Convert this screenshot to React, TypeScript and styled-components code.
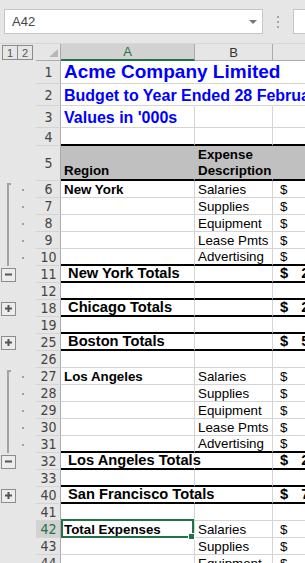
import React from "react";
import styled, { createGlobalStyle } from "styled-components";

const GRID = "#d4d4d4";
const HEAD_LINE = "#ababab";
const GREEN = "#217346";
const CHROME = "#e6e6e6";

const GlobalStyle = createGlobalStyle`
  html, body { margin: 0; padding: 0; }
  body {
    background: ${CHROME};
    font-family: "Liberation Sans", Arial, sans-serif;
    overflow: hidden;
  }
`;

const Window = styled.div`
  width: 305px;
  height: 563px;
  overflow: hidden;
  background: ${CHROME};
  display: flex;
  flex-direction: column;
`;

/* ---------- toolbar ---------- */

const Toolbar = styled.div`
  height: 44px;
  flex: none;
  box-sizing: border-box;
  display: flex;
  align-items: flex-start;
  padding: 9px 0 0 4px;
  border-bottom: 1px solid #d8d8d8;
`;

const NameBox = styled.div`
  width: 259px;
  height: 25px;
  flex: none;
  box-sizing: border-box;
  background: #fff;
  border: 1px solid #c6c6c6;
  display: flex;
  align-items: center;
  padding: 0 5px 0 7px;
  font-size: 13px;
  color: #444;
`;

const DropArrow = styled.span`
  margin-left: auto;
  width: 0;
  height: 0;
  border-left: 4px solid transparent;
  border-right: 4px solid transparent;
  border-top: 4px solid #777;
`;

const Grip = styled.div`
  margin: 7px 0 0 14px;
  width: 2px;
  flex: none;
  display: flex;
  flex-direction: column;
  gap: 3px;
`;

const GripDot = styled.span`
  width: 2px;
  height: 2px;
  background: #a6a6a6;
`;

const FormulaBox = styled.div`
  margin-left: 14px;
  flex: 1;
  height: 25px;
  box-sizing: border-box;
  background: #fff;
  border: 1px solid #c6c6c6;
  border-right: none;
`;

/* ---------- column header ---------- */

const HeaderRow = styled.div`
  display: flex;
  height: 17px;
  flex: none;
  background: ${CHROME};
`;

const LevelButtons = styled.div`
  width: 36px;
  flex: none;
  box-sizing: border-box;
  display: flex;
  padding: 1px 0 0 2px;
`;

const LevelButton = styled.div`
  width: 16px;
  height: 15px;
  box-sizing: border-box;
  border: 1px solid #8c8c8c;
  font-size: 11px;
  color: #555;
  display: flex;
  align-items: center;
  justify-content: center;
  & + & {
    margin-left: -1px;
  }
`;

const Corner = styled.div`
  width: 25px;
  flex: none;
  box-sizing: border-box;
  border-right: 1px solid ${HEAD_LINE};
  border-bottom: 1px solid ${HEAD_LINE};
  display: flex;
  align-items: flex-end;
  justify-content: flex-end;
  padding: 0 2px 3px 0;
`;

const ColHead = styled.div<{ $w?: number; $sel?: boolean }>`
  ${(p) => (p.$w ? `width: ${p.$w}px; flex: none;` : `flex: 1;`)}
  box-sizing: border-box;
  border-right: 1px solid ${HEAD_LINE};
  border-bottom: ${(p) => (p.$sel ? `2px solid ${GREEN}` : `1px solid ${HEAD_LINE}`)};
  background: ${(p) => (p.$sel ? "#d2d2d2" : CHROME)};
  color: ${(p) => (p.$sel ? GREEN : "#333")};
  font-size: 13px;
  display: flex;
  align-items: center;
  justify-content: center;
`;

/* ---------- sheet rows ---------- */

const Row = styled.div<{ $h: number }>`
  display: flex;
  height: ${(p) => p.$h}px;
  flex: none;
  background: #fff;
`;

const Gutter = styled.div`
  width: 36px;
  flex: none;
  display: flex;
  background: ${CHROME};
`;

const Level1 = styled.div`
  width: 17px;
  flex: none;
  display: flex;
  align-items: stretch;
`;

const Level2 = styled.div`
  width: 19px;
  flex: none;
  display: flex;
  align-items: center;
`;

const Bracket = styled.div<{ $top?: boolean }>`
  margin-left: 7px;
  width: 4px;
  box-sizing: border-box;
  border-left: 2px solid #a3a3a3;
  border-top: ${(p) => (p.$top ? "2px solid #a3a3a3" : "none")};
  margin-top: ${(p) => (p.$top ? "2px" : "0")};
`;

const Dot = styled.span`
  margin-left: 5px;
  width: 2px;
  height: 2px;
  background: #a0a0a0;
`;

const OutlineBtn = styled.div`
  align-self: center;
  margin-left: 1px;
  width: 15px;
  height: 14px;
  box-sizing: border-box;
  border: 1px solid #8c8c8c;
  background: #ececec;
  display: flex;
  align-items: center;
  justify-content: center;
`;

const RowNum = styled.div<{ $sel?: boolean }>`
  width: 25px;
  flex: none;
  box-sizing: border-box;
  border-right: 1px solid ${HEAD_LINE};
  border-bottom: 1px solid ${GRID};
  background: ${(p) => (p.$sel ? "#d2d2d2" : CHROME)};
  color: ${(p) => (p.$sel ? GREEN : "#444")};
  display: flex;
  align-items: center;
  justify-content: center;
  padding-left: 1px;
  font-family: "Liberation Sans Narrow", "DejaVu Sans Condensed", "Liberation Sans", sans-serif;
  font-size: 14px;
`;

type Edge = "grid" | "black";

const Cell = styled.div<{
  $w?: number;
  $edge?: Edge;
  $open?: boolean;
  $fill?: string;
  $pad?: number;
}>`
  ${(p) => (p.$w ? `width: ${p.$w}px; flex: none;` : `flex: 1;`)}
  box-sizing: border-box;
  border-right: 1px solid ${(p) => (p.$open || p.$fill ? "transparent" : GRID)};
  border-bottom: ${(p) => (p.$edge === "black" ? "2px solid #000" : `1px solid ${GRID}`)};
  background: ${(p) => p.$fill ?? "transparent"};
  display: flex;
  align-items: flex-end;
  padding: 0 0 0 ${(p) => p.$pad ?? 3}px;
  white-space: nowrap;
  min-width: 0;
`;

const SelectedCell = styled(Cell)`
  position: relative;
`;

const Selection = styled.div`
  position: absolute;
  top: -2px;
  left: 0;
  right: 0;
  bottom: -1px;
  border: 2px solid ${GREEN};
  pointer-events: none;
`;

const FillHandle = styled.div`
  position: absolute;
  right: -3px;
  bottom: -4px;
  width: 5px;
  height: 5px;
  background: ${GREEN};
  border: 1px solid #fff;
`;

const Text = styled.span<{ $size?: number; $bold?: boolean; $color?: string; $lh?: string }>`
  font-size: ${(p) => p.$size ?? 13.33}px;
  font-weight: ${(p) => (p.$bold ? 700 : 400)};
  color: ${(p) => p.$color ?? "#000"};
  line-height: ${(p) => p.$lh ?? "normal"};
  white-space: pre;
`;

const WrapText = styled.span`
  font-size: 13.33px;
  font-weight: 700;
  line-height: 16px;
  white-space: normal;
  color: #000;
`;

const Amount = styled.span`
  margin-left: 13px;
`;

/* ---------- data ---------- */

type GutterKind = "none" | "top" | "bar" | "minus" | "plus";

interface RowSpec {
  n: number;
  h?: number;
  gutter?: GutterKind;
  edge?: Edge;
  a?: React.ReactNode;
  aOpen?: boolean;
  b?: React.ReactNode;
  bOpen?: boolean;
  c?: React.ReactNode;
  fill?: string;
  sel?: boolean;
}

const blue = "#0000ff";

const item = (t: string) => <Text>{t}</Text>;
const dollar = <Text>$</Text>;
const total = (t: string) => (
  <Text $size={14.67} $bold $lh="1.05">
    {" " + t}
  </Text>
);
const totalAmt = (v: string) => (
  <Text $size={14.67} $bold $lh="1.05">
    $<Amount>{v}</Amount>
  </Text>
);

const detail = (
  n: number,
  name: string,
  gutter: GutterKind,
  opts: Partial<RowSpec> = {}
): RowSpec => ({ n, gutter, b: item(name), c: dollar, ...opts });

const rows: RowSpec[] = [
  {
    n: 1,
    h: 23,
    a: (
      <Text $size={19} $bold $color={blue}>
        Acme Company Limited
      </Text>
    ),
    aOpen: true,
    bOpen: true,
  },
  {
    n: 2,
    h: 22,
    a: (
      <Text $size={16} $bold $color={blue}>
        Budget to Year Ended 28 February 2019
      </Text>
    ),
    aOpen: true,
    bOpen: true,
  },
  {
    n: 3,
    h: 22,
    a: (
      <Text $size={16} $bold $color={blue}>
        Values in '000s
      </Text>
    ),
  },
  { n: 4, h: 18, edge: "black" },
  {
    n: 5,
    h: 35,
    edge: "black",
    fill: "#c0c0c0",
    a: (
      <Text $bold $lh="16px">
        Region
      </Text>
    ),
    b: <WrapText>Expense Description</WrapText>,
  },
  detail(6, "Salaries", "top", { a: <Text $bold>New York</Text> }),
  detail(7, "Supplies", "bar"),
  detail(8, "Equipment", "bar"),
  detail(9, "Lease Pmts", "bar"),
  detail(10, "Advertising", "bar", { edge: "black" }),
  { n: 11, gutter: "minus", edge: "black", a: total("New York Totals"), c: totalAmt("2,475") },
  { n: 12, edge: "black" },
  { n: 18, gutter: "plus", edge: "black", a: total("Chicago Totals"), c: totalAmt("2,130") },
  { n: 19, edge: "black" },
  { n: 25, gutter: "plus", edge: "black", a: total("Boston Totals"), c: totalAmt("5,260") },
  { n: 26 },
  detail(27, "Salaries", "top", { a: <Text $bold>Los Angeles</Text> }),
  detail(28, "Supplies", "bar"),
  detail(29, "Equipment", "bar"),
  detail(30, "Lease Pmts", "bar"),
  detail(31, "Advertising", "bar", { edge: "black" }),
  {
    n: 32,
    gutter: "minus",
    edge: "black",
    a: total("Los Angeles Totals"),
    aOpen: true,
    c: totalAmt("2,980"),
  },
  { n: 33, edge: "black" },
  {
    n: 40,
    gutter: "plus",
    edge: "black",
    a: total("San Francisco Totals"),
    aOpen: true,
    c: totalAmt("7,115"),
  },
  { n: 41 },
  detail(42, "Salaries", "none", { a: <Text $bold>Total Expenses</Text>, sel: true }),
  detail(43, "Supplies", "none"),
  detail(44, "Equipment", "none"),
];

/* ---------- pieces ---------- */

function MinusIcon() {
  return (
    <svg width="7" height="7" viewBox="0 0 7 7">
      <rect x="0" y="2.5" width="7" height="2" fill="#555" />
    </svg>
  );
}

function PlusIcon() {
  return (
    <svg width="7" height="7" viewBox="0 0 7 7">
      <rect x="0" y="2.5" width="7" height="2" fill="#555" />
      <rect x="2.5" y="0" width="2" height="7" fill="#555" />
    </svg>
  );
}

function GutterCell({ kind }: { kind: GutterKind }) {
  const grouped = kind === "top" || kind === "bar";
  return (
    <Gutter>
      <Level1>
        {grouped && <Bracket $top={kind === "top"} />}
        {kind === "minus" && (
          <OutlineBtn>
            <MinusIcon />
          </OutlineBtn>
        )}
        {kind === "plus" && (
          <OutlineBtn>
            <PlusIcon />
          </OutlineBtn>
        )}
      </Level1>
      <Level2>{grouped && <Dot />}</Level2>
    </Gutter>
  );
}

function SheetRow({ spec }: { spec: RowSpec }) {
  const { n, h = 17, gutter = "none", edge = "grid", a, aOpen, b, bOpen, c, fill, sel } = spec;
  const ACell = sel ? SelectedCell : Cell;
  return (
    <Row $h={h}>
      <GutterCell kind={gutter} />
      <RowNum $sel={sel}>{n}</RowNum>
      <ACell $w={134} $edge={edge} $open={aOpen} $fill={fill}>
        {a}
        {sel && (
          <Selection>
            <FillHandle />
          </Selection>
        )}
      </ACell>
      <Cell $w={78} $edge={edge} $open={bOpen} $fill={fill}>
        {b}
      </Cell>
      <Cell $w={120} $edge={edge} $fill={fill} $pad={7}>
        {c}
      </Cell>
    </Row>
  );
}

export default function App() {
  return (
    <>
      <GlobalStyle />
      <Window>
        <Toolbar>
          <NameBox>
            A42
            <DropArrow />
          </NameBox>
          <Grip>
            <GripDot />
            <GripDot />
            <GripDot />
          </Grip>
          <FormulaBox />
        </Toolbar>
        <HeaderRow>
          <LevelButtons>
            <LevelButton>1</LevelButton>
            <LevelButton>2</LevelButton>
          </LevelButtons>
          <Corner>
            <svg width="9" height="8" viewBox="0 0 9 8">
              <polygon points="9,0 9,8 0,8" fill="#b8b8b8" />
            </svg>
          </Corner>
          <ColHead $w={134} $sel>
            A
          </ColHead>
          <ColHead $w={78}>B</ColHead>
          <ColHead $w={120} />
        </HeaderRow>
        {rows.map((r) => (
          <SheetRow key={r.n} spec={r} />
        ))}
      </Window>
    </>
  );
}
